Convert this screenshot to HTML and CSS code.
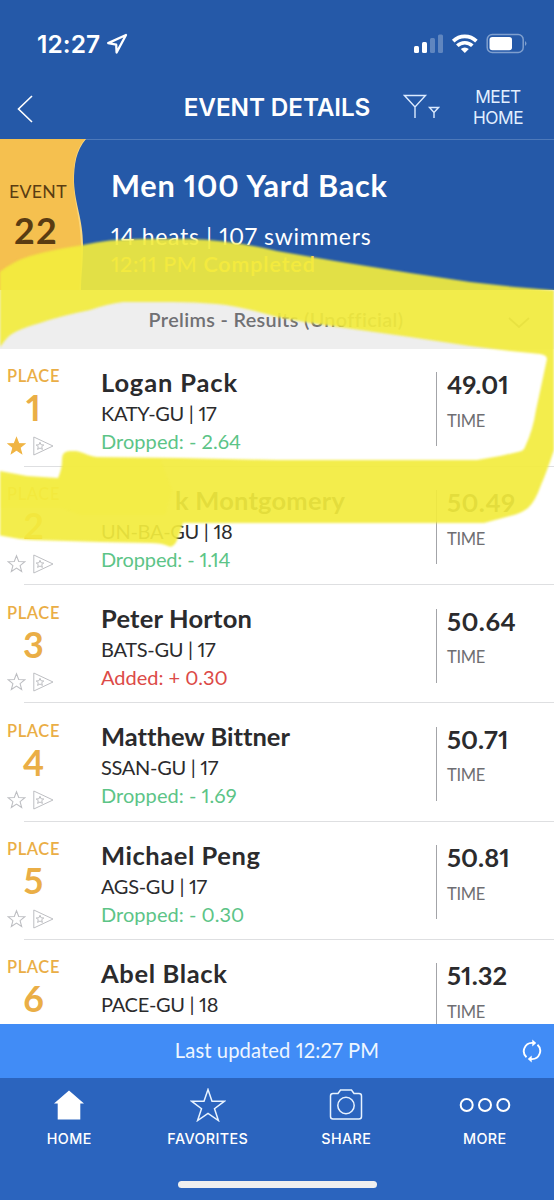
FILE: index.html
```html
<!DOCTYPE html>
<html lang="en">
<head>
<meta charset="utf-8">
<title>Event Details</title>
<link rel="stylesheet" href="styles.css">
</head>
<body>
<svg class="defs" width="0" height="0">
  <symbol id="star" viewBox="0 0 18 18"><path d="M9 1.2l2.1 5.4 5.8.3-4.5 3.6 1.5 5.6L9 12.9l-4.9 3.2 1.5-5.6L1.1 6.9l5.8-.3z"/></symbol>
  <symbol id="flag" viewBox="0 0 21 20"><path d="M.8 1v18L20 10z"/><path d="M7 6.3l1.1 2.5 2.7.2-2.1 1.7.7 2.7L7 12l-2.4 1.4.7-2.7L3.2 9l2.7-.2z"/></symbol>
</svg>
<div class="app">
  <header class="top">
    <div class="status">
      <span class="clock">12:27</span>
      <svg class="loc" width="22" height="22" viewBox="0 0 22 22"><path d="M20 2L2.2 10.1l8 1.6.4 7.8z"/></svg>
      <svg class="signals" width="114" height="22" viewBox="0 0 114 22">
        <g fill="#fff"><rect x="0" y="13" width="5" height="7" rx="1.5"/><rect x="8" y="9" width="5" height="11" rx="1.5"/><g opacity=".27"><rect x="16" y="5" width="5" height="15" rx="1.5"/><rect x="24" y="1.500" width="5" height="18.500" rx="1.500"/></g></g>
        <g fill="none" stroke="#fff" stroke-width="3.600"><path d="M39.200 8.100a16.500 16.500 0 0 1 23.200 0"/><path d="M43.300 12.800a10.700 10.700 0 0 1 15 0"/></g>
        <path fill="#fff" d="M46.800 16a6 6 0 0 1 8 0L50.800 20z"/>
        <rect x="73.200" y="1.500" width="36" height="18" rx="5" fill="none" stroke="#7f9fce" stroke-width="1.500"/>
        <rect x="75.500" y="4" width="22.500" height="13.300" rx="2.800" fill="#fff"/>
        <path d="M111 8v5q3-2.500 0-5z" fill="#7f9fce"/>
      </svg>
    </div>
    <nav class="bar">
      <svg class="back" width="17" height="28" viewBox="0 0 17 28"><path d="M15 1L1.500 14 15 27"/></svg>
      <h1>EVENT DETAILS</h1>
      <svg class="filter" width="37" height="26" viewBox="0 0 37 26"><path d="M1.500 1.500h21L12 13zM12 13v11M26.500 13.500h9L31 18.500zM31 18.500v5.500"/></svg>
      <div class="meet">MEET<br>HOME</div>
    </nav>
  </header>
  <section class="event">
    <svg class="wave" width="88" height="151" viewBox="0 0 88 151"><path fill="#fbd67c" d="M0 0h86C76 12 74 25 74 43c1 23 9 37 9 63 0 20-2 30-2 45H0z"/><path fill="#f5c04f" d="M0 0h85C75 12 73.500 25 73.500 43c1 23 7 37 7.500 63 .500 20-1 30-2 45H0z"/></svg>
    <div class="tag"><span>EVENT</span><b>22</b></div>
    <div class="info"><h2>Men 100 Yard Back</h2><p class="heats">14 heats | 107 swimmers</p><p class="done">12:11 PM <b>Completed</b></p></div>
  </section>
  <div class="round"><span>Prelims - Results (Unofficial)</span><svg width="24" height="14" viewBox="0 0 24 14"><path d="M2 2l10 9L22 2"/></svg></div>
  <main class="list">
    <article class="row"><div class="place"><span>PLACE</span><b>1</b><div class="marks on"><svg><use href="#star"/></svg><svg><use href="#flag"/></svg></div></div><div class="who"><h3 class="n1">Logan Pack</h3><p class="team">KATY-GU | 17</p><p class="down">Dropped: - 2.64</p></div><div class="time"><b>49.01</b><span>TIME</span></div></article>
    <article class="row"><div class="place"><span>PLACE</span><b>2</b><div class="marks"><svg><use href="#star"/></svg><svg><use href="#flag"/></svg></div></div><div class="who"><h3 class="n2">k Montgomery</h3><p class="team">UN-BA-GU | 18</p><p class="down short">Dropped: - 1.14</p></div><div class="time"><b class="wide">50.49</b><span>TIME</span></div></article>
    <article class="row"><div class="place"><span>PLACE</span><b>3</b><div class="marks"><svg><use href="#star"/></svg><svg><use href="#flag"/></svg></div></div><div class="who"><h3>Peter Horton</h3><p class="team">BATS-GU | 17</p><p class="up">Added: + 0.30</p></div><div class="time"><b class="wide">50.64</b><span>TIME</span></div></article>
    <article class="row"><div class="place"><span>PLACE</span><b>4</b><div class="marks"><svg><use href="#star"/></svg><svg><use href="#flag"/></svg></div></div><div class="who"><h3 class="n4">Matthew Bittner</h3><p class="team">SSAN-GU | 17</p><p class="down">Dropped: - 1.69</p></div><div class="time"><b>50.71</b><span>TIME</span></div></article>
    <article class="row"><div class="place"><span>PLACE</span><b>5</b><div class="marks"><svg><use href="#star"/></svg><svg><use href="#flag"/></svg></div></div><div class="who"><h3 class="n5">Michael Peng</h3><p class="team">AGS-GU | 17</p><p class="down">Dropped: - 0.30</p></div><div class="time"><b>50.81</b><span>TIME</span></div></article>
    <article class="row"><div class="place"><span>PLACE</span><b>6</b></div><div class="who"><h3 class="n6">Abel Black</h3><p class="team">PACE-GU | 18</p></div><div class="time"><b>51.32</b><span>TIME</span></div></article>
  </main>
  <div class="updated"><span>Last updated 12:27 PM</span>
    <svg width="20" height="24" viewBox="0 0 20 24"><g fill="none" stroke="#fff" stroke-width="1.900"><path d="M4.500 18.300A8.300 8.300 0 0 1 10 3.900h2"/><path d="M15.500 5.700A8.300 8.300 0 0 1 10 20.100H8"/></g><path fill="#fff" d="M10.300.5v7L14.200 4zM9.700 16.500v7L5.800 20z"/></svg>
  </div>
  <footer class="tabs">
    <div class="tab"><svg width="34" height="34" viewBox="0 0 34 34"><path fill="#fff" d="M17 2.500L32 15.500h-3.700V31.500H5.700V15.500H2z"/></svg><span>HOME</span></div>
    <div class="tab"><svg width="36" height="34" viewBox="0 0 36 34"><path class="line" d="M18 1.500l4 11.700h12.500l-10 7.500 3.900 11.800L18 25.300 7.600 32.500l3.900-11.800-10-7.500H14z"/></svg><span>FAVORITES</span></div>
    <div class="tab"><svg width="34" height="34" viewBox="0 0 34 34"><path class="line" d="M4 5.500h5l2.500-3.500h11L25 5.500h5q2.500 0 2.500 2.500v20.500q0 2.500-2.500 2.500H4q-2.500 0-2.500-2.500V8q0-2.500 2.500-2.500z"/><circle class="line" cx="17" cy="17.500" r="8.200"/></svg><span>SHARE</span></div>
    <div class="tab"><svg width="52" height="34" viewBox="0 0 52 34"><g fill="none" stroke="#fff" stroke-width="2"><circle cx="7.700" cy="17" r="6"/><circle cx="26" cy="17" r="6"/><circle cx="44.300" cy="17" r="6"/></g></svg><span>MORE</span></div>
    <div class="grip"></div>
  </footer>
  <svg class="marker" width="554" height="1200" viewBox="0 0 554 1200">
    <path d="M-6 277Q10 262 30 256T83 245Q108 239 140 239H190Q230 240 277 251L335 261 410 273 470 282 515 287 562 291V425Q549 467 541 485 535 502 528 508 520 514 510 516L484 523H183L178 538Q174 549 168 546 162 543 150 543L100 542 33 540Q14 539-6 534V470L27 476 58 478Q62 469 62 460C62 450 68 451 76 451 83 452 88 456 97 457L180 458 277 460H477L500 456 518 452Q524 451 525 447 533 430 536 410L547 359Q547 355 540 354L510 351 470 346 410 337 360 330 310 323 277 317Q240 306 217 304T173 302H123Q107 304 90 310 60 316 40 323 15 330 8 337 4 341-6 356Z"/>
    <path class="again" d="M64 464L67 455 78 455 97 459H160L172 490 165 515H80L62 508H-6V476L58 480Z"/>
  </svg>
</div>
</body>
</html>
```
FILE: styles.css
```css
* { box-sizing: border-box; margin: 0; padding: 0; }
body { width: 554px; height: 1200px; overflow: hidden; background: #fff; font-family: Lato, sans-serif; font-variant-numeric: proportional-nums; font-variant-ligatures: none; }
.defs { position: absolute; }
.app { position: relative; width: 554px; height: 1200px; overflow: hidden; display: flex; flex-direction: column; }
.top { height: 139px; flex: none; background: #2559a8; color: #fff; font-family: Inter, sans-serif; }
.status { height: 75px; padding: 33px 26px 0 37px; display: flex; align-items: flex-start; }
.clock { width: 69px; font-size: 24.500px; font-weight: 600; line-height: 22px; letter-spacing: .1px; white-space: nowrap; }
.loc { fill: none; stroke: #fff; stroke-width: 2.3; stroke-linejoin: round; }
.signals { margin-left: auto; }
.bar { height: 64px; display: grid; grid-template-columns: 167px 220px 64px 1fr; align-items: start; }
.back { margin: 20px 0 0 17px; fill: none; stroke: #fff; stroke-width: 1.6; }
.bar h1 { padding-top: 15.500px; font-size: 24.300px; line-height: 32px; font-weight: 600; text-align: center; letter-spacing: -.1px; white-space: nowrap; }
.filter { margin: 19px 0 0 16px; fill: none; stroke: #dcebff; stroke-width: 1.4; }
.meet { padding: 10.500px 9px 0 0; font-size: 17.300px; line-height: 21px; text-align: center; color: #e2efff; letter-spacing: -.5px; }
.event { position: relative; height: 151px; flex: none; display: flex; background: #2559a8; border-top: 1px solid #4d79ba; color: #fff; }
.wave { position: absolute; left: 0; top: -1px; }
.tag { position: relative; width: 76px; padding: 41px 0 0; display: flex; flex-direction: column; align-items: center; color: #5a3c12; }
.tag span { font-size: 17.700px; line-height: 22px; letter-spacing: .3px; }
.tag b { margin: 6px 4px 0 0; font-size: 36px; line-height: 42px; letter-spacing: 1.400px; }
.info { padding: 25.500px 0 0 35px; white-space: nowrap; }
.info h2 { font-size: 30.700px; line-height: 40px; font-weight: 700; letter-spacing: .750px; }
.info .heats { margin-top: 15px; font-size: 23px; line-height: 30px; letter-spacing: .680px; }
.info .done { font-size: 21.500px; line-height: 26px; color: #ffd24a; letter-spacing: .600px; }
.info .done b { font-weight: 600; letter-spacing: .900px; }
.round { height: 58.500px; flex: none; background: #eee; display: flex; align-items: center; justify-content: flex-end; padding-right: 23px; color: #707073; font-size: 19.800px; font-weight: 600; letter-spacing: .350px; }
.round span { width: 260px; white-space: nowrap; text-align: center; margin: -1px 101px 0 0; }
.round svg { fill: none; stroke: #707073; stroke-width: 1.8; margin-top: 8px; }
.list { height: 675.500px; flex: none; overflow: hidden; }
.row { position: relative; height: 118.300px; display: grid; grid-template-columns: 101px 335px 1fr; white-space: nowrap; color: #2b2b2d; background: linear-gradient(#dedfe1, #dedfe1) 24px 100% / 530px 1px no-repeat; }
.place { width: 67px; padding-top: 17.500px; display: flex; flex-direction: column; align-items: center; color: #eaae46; }
.place span { font-size: 16.500px; line-height: 20px; font-weight: 600; letter-spacing: .600px; }
.place b { margin-top: 3px; font-size: 36px; line-height: 36px; }
.marks { margin-top: 10.500px; display: flex; align-self: flex-start; padding-left: 7px; gap: 7px; }
.marks svg { width: 19px; height: 20px; fill: none; stroke: #bdbec2; stroke-width: 1; }
.marks svg + svg { width: 21px; }
.on svg:first-child { fill: #f0b443; stroke: #f0b443; }
.who { padding-top: 18px; }
.who h3 { font-size: 25.500px; line-height: 30px; font-weight: 700; letter-spacing: .200px; }
.who p { font-size: 20px; line-height: 28px; }
.who .team { margin-top: 2px; letter-spacing: -.300px; }
.who .n1 { letter-spacing: .850px; }
.who .n2 { padding-left: 74px; }
.who .n4 { letter-spacing: 0; }
.who .n5 { letter-spacing: .550px; }
.who .n6 { letter-spacing: .650px; }
.who .down { color: #5cc487; letter-spacing: .050px; }
.who .short { letter-spacing: -.150px; }
.who .up { color: #dc4a47; }
.time { height: 74px; margin-top: 23.500px; padding-left: 10px; border-left: 1px solid #a3a4a8; display: flex; flex-direction: column; }
.time b { font-size: 25.500px; line-height: 24px; letter-spacing: .1px; }
.time .wide { letter-spacing: .500px; }
.time span { margin-top: 14.500px; font-size: 16.500px; line-height: 20px; color: #6e6e72; letter-spacing: -.300px; }
.updated { height: 53.500px; flex: none; display: grid; grid-template-columns: 554px; align-items: center; background: #418cf6; color: #eef6ff; font-size: 20.200px; letter-spacing: .1px; }
.updated span { grid-area: 1 / 1; text-align: center; margin-top: -2px; }
.updated svg { grid-area: 1 / 1; justify-self: end; margin-right: 12px; }
.tabs { flex: 1; display: grid; grid-template-columns: repeat(4, 138.500px); grid-template-rows: 90px 1fr; background: #2b64be; color: #fff; font-family: Inter, sans-serif; }
.tab { display: flex; flex-direction: column; align-items: center; padding-top: 10.500px; font-size: 14.300px; line-height: 18px; font-weight: 500; letter-spacing: .400px; }
.tab span { margin-top: 8px; }
.line { fill: none; stroke: #e8f3ff; stroke-width: 1.5; }
.grip { grid-column: 1 / -1; justify-self: center; width: 199px; height: 7px; margin-top: 13.500px; border-radius: 4px; background: #efefef; }
.marker { position: absolute; left: 0; top: 0; fill: #f2ec3e; fill-opacity: .925; filter: blur(1px); pointer-events: none; }
.again { fill-opacity: .400; }
```
